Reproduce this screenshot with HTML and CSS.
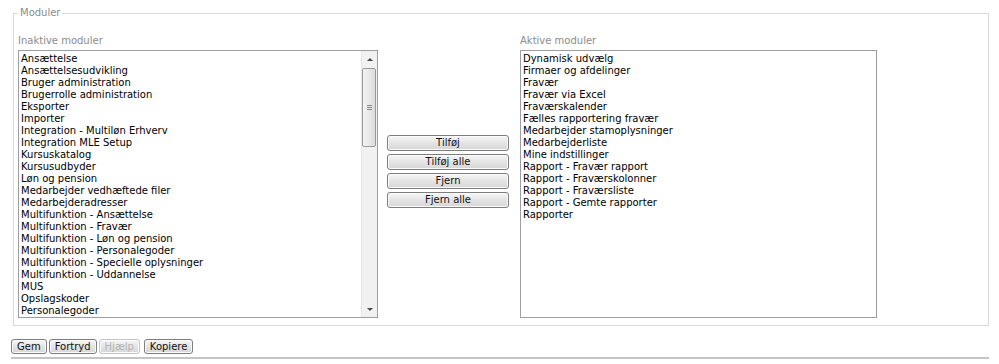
FILE: index.html
```html
<!DOCTYPE html>
<html lang="da">
<head>
<meta charset="utf-8">
<title>Moduler</title>
<link rel="stylesheet" href="styles.css">
</head>
<body>
<fieldset class="group">
  <legend class="group-title">Moduler</legend>
  <div class="columns">
    <div class="col col-left">
      <div class="col-label">Inaktive moduler</div>
      <div class="listbox">
        <ul class="items">
          <li>Ansættelse</li>
          <li>Ansættelsesudvikling</li>
          <li>Bruger administration</li>
          <li>Brugerrolle administration</li>
          <li>Eksporter</li>
          <li>Importer</li>
          <li>Integration - Multiløn Erhverv</li>
          <li>Integration MLE Setup</li>
          <li>Kursuskatalog</li>
          <li>Kursusudbyder</li>
          <li>Løn og pension</li>
          <li>Medarbejder vedhæftede filer</li>
          <li>Medarbejderadresser</li>
          <li>Multifunktion - Ansættelse</li>
          <li>Multifunktion - Fravær</li>
          <li>Multifunktion - Løn og pension</li>
          <li>Multifunktion - Personalegoder</li>
          <li>Multifunktion - Specielle oplysninger</li>
          <li>Multifunktion - Uddannelse</li>
          <li>MUS</li>
          <li>Opslagskoder</li>
          <li>Personalegoder</li>
          <li class="partial">Personaleinformation</li>
        </ul>
        <div class="scrollbar">
          <div class="sb-btn"><span class="arrow-up"></span></div>
          <div class="sb-thumb"><span class="grip"></span></div>
          <div class="sb-track"></div>
          <div class="sb-btn"><span class="arrow-down"></span></div>
        </div>
      </div>
    </div>
    <div class="col col-mid">
      <button class="btn move-btn">Tilføj</button>
      <button class="btn move-btn">Tilføj alle</button>
      <button class="btn move-btn">Fjern</button>
      <button class="btn move-btn">Fjern alle</button>
    </div>
    <div class="col col-right">
      <div class="col-label">Aktive moduler</div>
      <div class="listbox">
        <ul class="items">
          <li>Dynamisk udvælg</li>
          <li>Firmaer og afdelinger</li>
          <li>Fravær</li>
          <li>Fravær via Excel</li>
          <li>Fraværskalender</li>
          <li>Fælles rapportering fravær</li>
          <li>Medarbejder stamoplysninger</li>
          <li>Medarbejderliste</li>
          <li>Mine indstillinger</li>
          <li>Rapport - Fravær rapport</li>
          <li>Rapport - Fraværskolonner</li>
          <li>Rapport - Fraværsliste</li>
          <li>Rapport - Gemte rapporter</li>
          <li>Rapporter</li>
        </ul>
      </div>
    </div>
  </div>
</fieldset>
<div class="actions">
  <button class="btn act-btn">Gem</button>
  <button class="btn act-btn">Fortryd</button>
  <button class="btn act-btn" disabled>Hjælp</button>
  <button class="btn act-btn act-gap">Kopiere</button>
</div>
<div class="rule"></div>
</body>
</html>
```

FILE: styles.css
```css
html, body {
  margin: 0;
  padding: 0;
  background: #ffffff;
}
body {
  font-family: "DejaVu Sans", Verdana, sans-serif;
  font-size: 10px;
  line-height: 12px;
  color: #000;
}
.group {
  margin: 7px 10px 0 13px;
  padding: 16px 0 7px 4px;
  border: 1px solid #d9d9d9;
  min-width: 0;
}
.group-title {
  padding: 0 2px;
  color: #8c8c8c;
  font-size: 10px;
  line-height: 12px;
}
.columns {
  display: flex;
  align-items: flex-start;
}
.col-left { width: 360px; }
.col-mid {
  width: 122px;
  margin-left: 9px;
  padding-top: 100px;
  display: flex;
  flex-direction: column;
}
.col-right {
  width: 357px;
  margin-left: 11px;
}
.col-label {
  color: #8c8c8c;
  height: 12px;
  margin-bottom: 3px;
}
.listbox {
  display: flex;
  height: 266px;
  border: 1px solid #9c9ea3;
  background: #fff;
  overflow: hidden;
}
.items {
  flex: 1;
  list-style: none;
  margin: 0;
  padding: 2px 2px 0;
  overflow: hidden;
}
.items li {
  height: 12px;
  white-space: nowrap;
}
.scrollbar {
  width: 15px;
  background: #f1f1f1;
  border-left: 1px solid #e6e6e6;
  display: flex;
  flex-direction: column;
}
.sb-btn {
  height: 16px;
  display: flex;
  align-items: center;
  justify-content: center;
}
.arrow-up, .arrow-down {
  width: 0;
  height: 0;
  border-left: 3px solid transparent;
  border-right: 3px solid transparent;
}
.arrow-up { border-bottom: 3px solid #4a4a4a; }
.arrow-down { border-top: 3px solid #4a4a4a; }
.sb-thumb {
  height: 77px;
  margin: 1px 1px 0 0;
  border: 1px solid #9a9a9a;
  border-radius: 2px;
  background: linear-gradient(to right, #f4f4f4, #dcdcdc);
  display: flex;
  align-items: center;
  justify-content: center;
}
.grip {
  width: 5px;
  height: 5px;
  background: repeating-linear-gradient(to bottom, #8a8a8a 0 1px, transparent 1px 2px);
}
.sb-track { flex: 1; }
.btn {
  font-family: "DejaVu Sans", Verdana, sans-serif;
  font-size: 10px;
  line-height: 12px;
  color: #111;
  border: 1px solid #7d7d7d;
  border-radius: 3px;
  background: linear-gradient(to bottom, #f7f7f7, #e4e4e4 50%, #d6d6d6);
  box-shadow: inset 0 0 0 1px #fbfbfb;
  padding: 0;
  margin: 0;
}
.move-btn {
  height: 16px;
  margin-bottom: 3px;
}
.actions {
  display: flex;
  margin: 13px 0 0 11px;
}
.act-btn {
  height: 15px;
  padding: 0 5px;
  margin-right: 2px;
  line-height: 12px;
}
.act-btn:disabled {
  color: #b5b5b5;
  border-color: #c4c4c4;
}
.act-gap { margin-left: 2px; }
.rule {
  margin: 3px 10px 0 11px;
  height: 2px;
  background: #c4c4c4;
}
```
